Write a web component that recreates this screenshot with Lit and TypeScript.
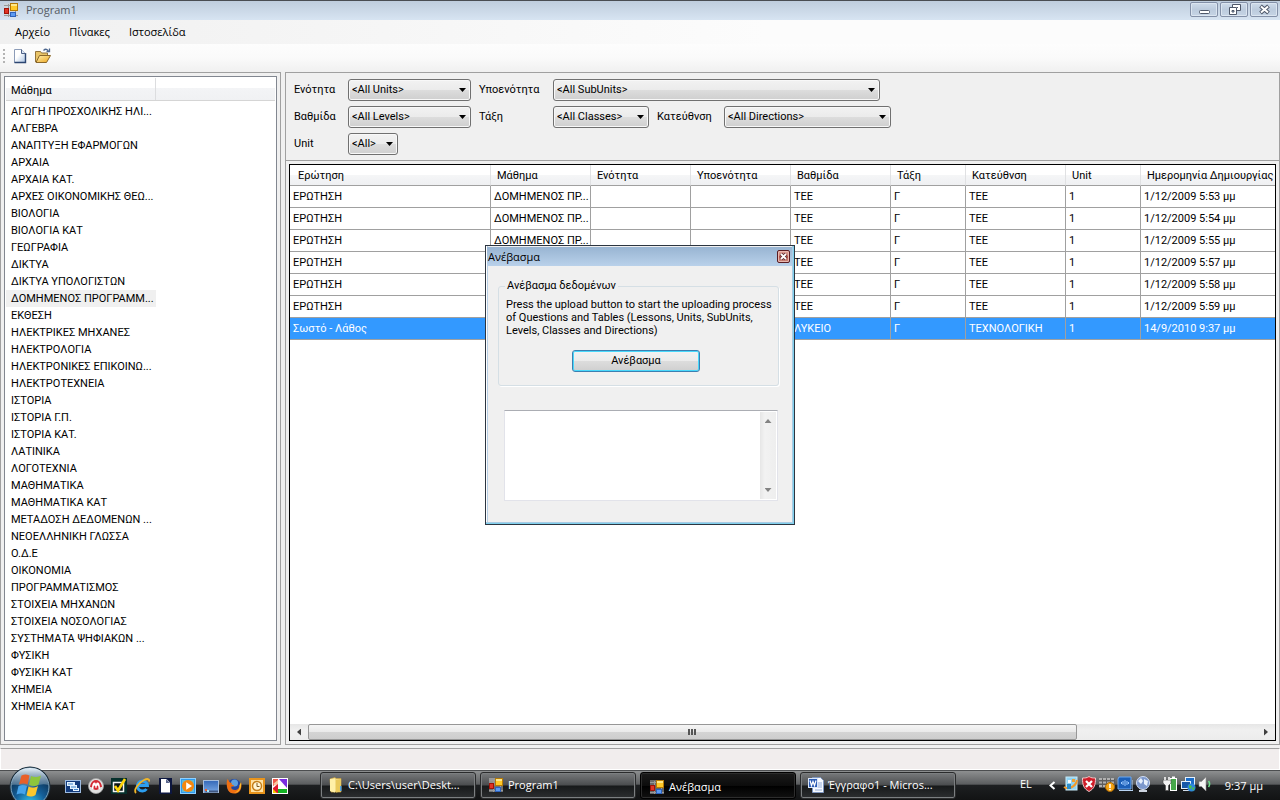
import { LitElement, html, css, svg, nothing } from "lit";
import { customElement, property, state } from "lit/decorators.js";
import { classMap } from "lit/directives/class-map.js";

const formIcon = svg`
  <rect x="1" y="1" width="14" height="14" fill="#d8d8d8" opacity=".45"/>
  <path d="M1 3.500h6M1 13.500h14M5.500 2v13M12.500 9v6" stroke="#9a9a9a" fill="none"/>
  <rect x="7.500" y="1.500" width="7" height="7" fill="#ffc928" stroke="#b57a06"/>
  <rect x="8" y="2" width="6" height="2" fill="#ffe88a"/>
  <rect x="1.500" y="6.500" width="4" height="5" fill="#e03424" stroke="#a01208"/>
  <rect x="7.500" y="10.500" width="5" height="4" fill="#5c9bf2" stroke="#2e62bc"/>`;

const icons: Record<string, unknown> = {
  form: formIcon,
  newdoc: svg`
    <defs><linearGradient id="nd" x2="1" y2="1"><stop offset=".4" stop-color="#fff"/><stop offset="1" stop-color="#a9c2e2"/></linearGradient></defs>
    <path d="M2.500 1.500h7l4 4v9h-11z" fill="url(#nd)" stroke="#8c9cb8"/>
    <path d="M13.500 5v9.500h-11" stroke="#2c4672" fill="none" stroke-width="1.400"/>
    <path d="M9.500 1.500v4h4" fill="#dce6f4" stroke="#4e6288"/>`,
  open: svg`
    <defs><linearGradient id="fo" x2="1" y2="1"><stop offset="0" stop-color="#fff0b0"/><stop offset="1" stop-color="#eda51c"/></linearGradient></defs>
    <path d="M.5 14V3.500h5l1 1.500h6v3" fill="#e9c468" stroke="#93733a"/>
    <path d="M1 14.500L4.500 7.500h11l-4 7z" fill="url(#fo)" stroke="#8a672a"/>
    <path d="M8.500 2.500c2-2 4-1.500 5 1M11.500 3.500h3v-3" fill="none" stroke="#4d678f" stroke-width="1.300"/>`,
  switcher: svg`
    <rect x=".5" y="2.500" width="15" height="12" fill="#123a7c" stroke="#9dbbe0"/>
    <path d="M2 4h8v4H2zM5 7h7v4H5zM8 10h6v3H8z" fill="#e4f2ff"/>
    <path d="M3 5.500h5v1H3zM6 8.500h5v1H6zM9 11h4v1H9z" fill="#3f84cc"/>`,
  avira: svg`
    <circle cx="8" cy="8" r="7.500" fill="#e0e0e0" stroke="#a4a4a4" stroke-width=".8"/>
    <path d="M2 9a6 6 0 0 1 12 0z" fill="#d42a34"/><circle cx="8" cy="7" r="5" fill="#d42a34"/>
    <path d="M4 11c0-4 .8-6.500 2.500-6.500C8 4.500 8 6 8 8c0-2 0-3.500 1.500-3.500C11.200 4.500 12 7 12 11h-1.500c0-2-.2-3.500-1-3.500S8.500 9 8.500 10h-1c0-1-.2-2.500-1-2.500s-1 1.500-1 3.500z" fill="#fff"/>`,
  check: svg`
    <rect width="16" height="16" fill="#06302c"/><rect x="2.500" y="4.500" width="10" height="9" fill="#0c1414" stroke="#f4f4f4" stroke-width="1.500"/>
    <path d="M4 8l3 4.500L14 1" fill="none" stroke="#ffd60a" stroke-width="2.600"/>`,
  ie: svg`
    <path d="M12.500 11a5 5 0 1 1 .9-3.500H5" fill="none" stroke="#2c9ef0" stroke-width="3"/>
    <path d="M2 15C-1 12 5 4.500 10 2c3-1.500 6-1.500 5 1.500" fill="none" stroke="#efb52a" stroke-width="1.800"/>`,
  page: svg`<rect x="2" width="13" height="16" fill="#0d1740"/><path d="M4 1h5.500L13 4.500V14.500H4z" fill="#fff"/><path d="M9 1v4h4" fill="#5c6890"/>`,
  player: svg`
    <rect x=".5" y=".5" width="15" height="15" fill="#2e9cf0" stroke="#8fd0ff"/><path d="M2 2h12v12H2z" fill="#8ad0c0" opacity=".6"/>
    <circle cx="8" cy="8" r="6" fill="#f5870f"/><path d="M6.200 4.200v7.600L12 8z" fill="#fff"/>`,
  desktop: svg`
    <defs><linearGradient id="dk" x2="0" y2="1"><stop offset="0" stop-color="#3468b8"/><stop offset="1" stop-color="#7aa8e4"/></linearGradient></defs>
    <rect x=".5" y="2.500" width="15" height="12" fill="url(#dk)" stroke="#a8bedc"/><path d="M4 12.500h11v2H1z" fill="#3f5680"/>
    <rect x="2" y="11" width="2" height="2" fill="#f0602c"/><rect x="4" y="12" width="2" height="2" fill="#a0e8f8"/>`,
  firefox: svg`
    <circle cx="8" cy="8" r="7" fill="#2346a0"/><circle cx="8.500" cy="5" r="3.500" fill="#5ea0e0"/>
    <path d="M1.500 1C0 5 0 15.500 8 15.500c6.500 0 8.500-6 7-11.500-.5 2-.8 3-1.500 3.500C13 11 11 12 9 12c-3 0-4.300-2-3.500-3.500C7 8.500 8 8 8 7.200L5.500 6.500 5.800 5 4 4.500z" fill="#ee6f12"/>
    <path d="M15 4.500c1 6.500-3 10.500-7.500 10.500 4.500-1.500 6.500-4 6-8z" fill="#ffc02a"/>`,
  outlook: svg`
    <rect x="1" y="1" width="14" height="14" fill="#ffe2a4" stroke="#e8941c" stroke-width="2"/>
    <circle cx="8" cy="8" r="4.500" fill="#fff5d4" stroke="#c47e1a" stroke-width="1.500"/><path d="M8 5v3.500h2.500" fill="none" stroke="#80571a"/>`,
  squares: svg`
    <rect width="16" height="16" fill="#fff"/><path d="M1 1h5v4L1 8z" fill="#f05a48"/><path d="M7 1h8v9z" fill="#7a2ce0"/>
    <path d="M1 6l5-4v7z" fill="#f8c8a0"/><path d="M1 10l5-4v9H1z" fill="#e01a2c"/><path d="M1 11l4 4H1z" fill="#f8d000"/><path d="M6 11h9v4H6z" fill="#14b424"/><path d="M8 5l5 5H6z" fill="#fff"/>`,
  folder: svg`
    <path d="M2 2l5-1.500 1 1h5V15H3z" fill="#f3dc84" stroke="#c7a044" stroke-width=".7"/><path d="M2 2l5-.5V15.500L2 14z" fill="#fff0a8"/>
    <path d="M8 3v12.500l4.500-1V2z" fill="#e9c95c"/><path d="M12 9h1.500v5H12z" fill="#4ea4e8"/>`,
  word: svg`
    <path d="M4.500.5h8l3 3v12h-11z" fill="#f7faff" stroke="#7e96c0"/><path d="M10 6h4M10 8h4M7 13h7M10 10h4" stroke="#93abd8"/>
    <rect x=".5" y="1.500" width="9" height="9" fill="#2c5cb4" stroke="#dce8fa"/>
    <path d="M2 3.500L3.500 8.500 5 4.500 6.500 8.500 8 3.500" fill="none" stroke="#fff" stroke-width="1.200"/>`,
  update: svg`
    <rect x="3" y="1" width="11" height="13" fill="#8fd3f4" stroke="#c8ecfa"/><path d="M5 4h3v3H5z" fill="#f8fcff"/><path d="M9 3h3v3H9z" fill="#f0a030"/>
    <path d="M1 11c4 3 12 0 13-7" fill="none" stroke="#f29a28" stroke-width="2"/><path d="M4 8h4v5H4z" fill="#2d8cc8"/>`,
  shield: svg`
    <path d="M8 .5c2 1.500 4 1.500 6.500 1.500 0 7-1 10.500-6.500 13.500C2.500 12.500 1.500 9 1.500 2 4 2 6 2 8 .5z" fill="#cf1c28" stroke="#f0c8c8"/>
    <path d="M5 5l6 6M11 5l-6 6" stroke="#fff" stroke-width="2.200"/>`,
  grid: svg`
    <path d="M0 3h16v9H0z" fill="#5c5c5c"/><path d="M0 3h16M0 6.500h16M0 10h9" stroke="#b0b0b0" stroke-width="2" stroke-dasharray="3 1"/>
    <circle cx="11" cy="11" r="4.500" fill="#f4a414" stroke="#a86808"/><path d="M11 8v4M11 13v1.200" stroke="#fff" stroke-width="1.600"/>`,
  chip: svg`
    <path d="M2 1h12v12H1V3z" fill="#1b5fb8" stroke="#6eaaf0"/><path d="M2 14.500h14V4" stroke="#b8d4f4" fill="none"/>
    <path d="M8 4v6M6 5v4M10 5v4M4.500 6v2M11.500 6v2" stroke="#9ccaff"/>`,
  globe: svg`
    <circle cx="8" cy="7" r="6.500" fill="#7c98cc" stroke="#d2def4"/><path d="M3 5l3-3 2 3-2 3zM9 3l4 2-1 5-3-2z" fill="#e8f0fc"/>
    <path d="M4 15h8M8 13v2" stroke="#cdd4e0" stroke-width="1.800"/>`,
  power: svg`
    <rect x="8.500" y="2.500" width="6" height="12" fill="#46a84a" stroke="#fff"/><rect x="10" y=".5" width="3" height="2" fill="#fff"/>
    <path d="M1 4h8v3L6.500 9.500v5h-3v-5L1 7z" fill="#f2f2f2" stroke="#444" stroke-width=".6"/><path d="M3 1v3M7 1v3" stroke="#fff" stroke-width="1.500"/>`,
  network: svg`
    <rect x="5.500" y="1.500" width="9" height="7" fill="#1a6cc8" stroke="#e4f0fc"/><rect x="1.500" y="5.500" width="9" height="7" fill="#1658a8" stroke="#e4f0fc"/>
    <path d="M3 14.500h6" stroke="#d4dce8"/><circle cx="11.500" cy="11.500" r="4" fill="#2d86dc"/><path d="M9 9l3 1-1 3-2-1zM12 12l3-1-2 4z" fill="#49c04c"/>`,
  sound: svg`
    <path d="M1 5.500h2.500L8 1v14l-4.500-4.500H1z" fill="#f4f4f4" stroke="#8a8a8a" stroke-width=".6"/><path d="M10.500 5c1.500 2 1.500 4 0 6" fill="none" stroke="#6ce08a" stroke-width="1.500"/>`,
};

@customElement("app-icon")
class AppIcon extends LitElement {
  @property() name = "form";
  static styles = css`
    :host { display: block; flex: none; width: 16px; height: 16px; }
    .glyph { display: block; width: 100%; height: 100%; }
  `;
  render() {
    return html`<svg class="glyph" viewBox="0 0 16 16" aria-hidden="true">${icons[this.name]}</svg>`;
  }
}

@customElement("combo-box")
class ComboBox extends LitElement {
  @property() value = "";
  @property() label = "";
  static styles = css`
    :host { display: flex; align-items: center; font: 11px/16px Roboto, "Liberation Sans", sans-serif; }
    .label { flex: none; width: var(--label-width, 54px); box-sizing: border-box; }
    .field { display: grid; flex: 1; align-items: center; }
    .select, .arrow { grid-area: 1 / 1; }
    .select {
      appearance: none; width: 100%; height: 22px; padding: 0 16px 0 3px; margin: 0; color: #000;
      border: 1px solid #707070; border-radius: 3px; box-shadow: inset 0 0 0 1px #f8f8f8;
      background: linear-gradient(#f2f2f2, #ebebeb 50%, #dddddd 50%, #cfcfcf);
      font: 11px/16px Roboto, "Liberation Sans", sans-serif;
    }
    .arrow { justify-self: end; margin-right: 5px; pointer-events: none; width: 7px; height: 4px; background: #000; clip-path: polygon(0 0, 100% 0, 50% 100%); }
  `;
  render() {
    return html`
      <label class="label" for="s">${this.label}</label>
      <span class="field">
        <select class="select" id="s"><option>${this.value}</option></select>
        <span class="arrow"></span>
      </span>`;
  }
}

@customElement("lesson-list")
class LessonList extends LitElement {
  @property({ attribute: false }) items: string[] = [];
  @state() selected = 11;
  static styles = css`
    :host { display: block; box-sizing: border-box; padding: 1px; background: #fff; border: 1px solid #828790; overflow: hidden; font: 11px/17px Roboto, "Liberation Sans", sans-serif; }
    .head { display: flex; height: 22px; border-bottom: 1px solid #d5d5d5; background: linear-gradient(#fff 45%, #f3f4f6 45%, #f0f1f3); }
    .title { width: 144px; padding: 4px 0 0 5px; border-right: 1px solid #dcdddf; }
    .items { list-style: none; margin: 2px 0 0; padding: 0; }
    .item { width: 145px; height: 17px; padding-left: 5px; white-space: nowrap; cursor: default; }
    .on { background: #f0f0f0; }
  `;
  render() {
    return html`
      <div class="head"><div class="title">Μάθημα</div></div>
      <ul class="items" role="listbox" aria-label="Μάθημα">
        ${this.items.map((t, i) => html`<li role="option" aria-selected=${i === this.selected}
          class=${classMap({ item: true, on: i === this.selected })} @click=${() => (this.selected = i)}>${t}</li>`)}
      </ul>`;
  }
}

@customElement("question-grid")
class QuestionGrid extends LitElement {
  @property({ attribute: false }) rows: string[][] = [];
  static styles = css`
    :host { display: flex; flex-direction: column; box-sizing: border-box; border: 1px solid #000; background: #fff; overflow: hidden; font: 11px/16px Roboto, "Liberation Sans", sans-serif; }
    .scroller { flex: 1; overflow: hidden; }
    .table { width: 100%; table-layout: fixed; border-collapse: separate; border-spacing: 0; }
    .c0 { width: 201px; } .wide { width: 100px; } .slim { width: 75px; }
    .th { height: 21px; box-sizing: border-box; padding: 2px 0 0 6px; text-align: left; font-weight: 400; white-space: nowrap; border-right: 1px solid #e0e1e3; border-bottom: 1px solid #a0a0a0; background: linear-gradient(#fff 50%, #f5f6f7 50%, #eff0f2); }
    .th:first-child { padding-left: 8px; }
    .td { height: 22px; box-sizing: border-box; padding: 0 0 0 3px; white-space: nowrap; border-right: 1px solid #a0a0a0; border-bottom: 1px solid #a0a0a0; }
    .th:last-child, .td:last-child { border-right: 0; }
    .on .td { background: #3399ff; color: #fff; }
    .bar { display: flex; height: 16px; background: linear-gradient(#e6e6e6, #f0f0f0 40%, #ececec); }
    .step { display: grid; place-items: center; width: 18px; padding: 0; border: 0; background: none; }
    .tri { width: 4px; height: 7px; background: #404040; clip-path: polygon(0 50%, 100% 0, 100% 100%); }
    .next { transform: scaleX(-1); }
    .track { flex: 1; display: flex; }
    .thumb { display: flex; justify-content: center; align-items: center; gap: 1px; box-sizing: border-box; width: 81%; border: 1px solid #979797; border-radius: 2px; background: linear-gradient(#f5f5f5, #e9e9e9 50%, #d4d4d4 50%, #cdcdcd); }
    .grip { width: 2px; height: 6px; background: #555; }
  `;
  render() {
    const heads = ["Ερώτηση", "Μάθημα", "Ενότητα", "Υποενότητα", "Βαθμίδα", "Τάξη", "Κατεύθνση", "Unit", "Ημερομηνία Δημιουργίας"];
    const cols = ["c0", "wide", "wide", "wide", "wide", "slim", "wide", "slim", ""];
    return html`
      <div class="scroller">
        <table class="table">
          <colgroup>${cols.map((c) => html`<col class=${c || nothing}>`)}</colgroup>
          <thead><tr>${heads.map((h) => html`<th class="th" scope="col">${h}</th>`)}</tr></thead>
          <tbody>${this.rows.map((r, i) => html`
            <tr class=${classMap({ on: i === this.rows.length - 1 })}>${r.map((c) => html`<td class="td">${c}</td>`)}</tr>`)}
          </tbody>
        </table>
      </div>
      <div class="bar">
        <button class="step" aria-label="Αριστερά"><span class="tri"></span></button>
        <div class="track"><div class="thumb"><span class="grip"></span><span class="grip"></span><span class="grip"></span></div></div>
        <button class="step" aria-label="Δεξιά"><span class="tri next"></span></button>
      </div>`;
  }
}

@customElement("upload-dialog")
class UploadDialog extends LitElement {
  static styles = css`
    :host { display: flex; flex-direction: column; box-sizing: border-box; border: 1px solid #2c3540; background: #f0f0f0; box-shadow: inset -1px -1px #7fd0ec, inset -2px -2px #a9cbe4, inset 1px 0 #fff, inset 2px 0 #b8cfe6; font: 11px/16px Roboto, "Liberation Sans", sans-serif; }
    .bar { display: flex; align-items: center; justify-content: space-between; height: 19px; margin: 1px 2px 0 1px; padding-right: 2px; background: linear-gradient(#98b4d2, #b9d1ea); font: 11px/16px "Open Sans", "Noto Sans", sans-serif; }
    .title { padding: 1px 0 0 1px; }
    .close { display: grid; place-items: center; width: 13px; height: 13px; padding: 0; border: 1px solid #5a1c22; border-radius: 2px; background: linear-gradient(#e0a59c, #c47166 50%, #b45348 50%, #cf8f84); box-shadow: inset 0 0 0 1px #e8b8b0; }
    .x { width: 9px; height: 9px; }
    .body { flex: 1; padding: 12px 15px 23px 12px; display: flex; flex-direction: column; }
    .group { margin: 0; padding: 4px 8px 13px 7px; border: 1px solid #d5dfe5; border-radius: 3px; min-width: 0; box-shadow: 1px 1px #fff; }
    .legend { padding: 0 2px; margin-left: -1px; }
    .text { margin: 0; font: 11px/13px Roboto, "Liberation Sans", sans-serif; white-space: nowrap; }
    .go { display: block; width: 128px; height: 22px; margin: 13px auto 0 66px; padding: 0; border: 1px solid #3c7fb1; border-radius: 3px; box-shadow: inset 0 0 0 1px #48d8fb; background: linear-gradient(#f2f2f2, #ebebeb 50%, #dddddd 50%, #cfcfcf); font: 11px/16px Roboto, sans-serif; color: #000; }
    .log { flex: 1; display: flex; margin: 24px 1px 0 6px; border: 1px solid #e2e3ea; border-top-color: #abadb3; background: #fff; }
    .area { flex: 1; min-width: 0; padding: 2px; border: 0; resize: none; outline: 0; overflow: hidden; font: 11px/16px Roboto, sans-serif; }
    .scroll { display: flex; flex-direction: column; justify-content: space-between; align-items: center; width: 16px; padding: 7px 0; margin: 1px; background: linear-gradient(90deg, #e6e6e6, #f2f2f2 30%, #eeeeee); box-sizing: border-box; }
    .tri { width: 7px; height: 4px; background: #838383; clip-path: polygon(50% 0, 100% 100%, 0 100%); }
    .down { transform: scaleY(-1); }
  `;
  render() {
    return html`
      <div class="bar"><span class="title">Ανέβασμα</span>
        <button class="close" aria-label="Κλείσιμο"><svg class="x" viewBox="0 0 9 9">
          <path d="M2 2l5 5M7 2L2 7" stroke="#5b2a30" stroke-width="3.400"/><path d="M2 2l5 5M7 2L2 7" stroke="#fff" stroke-width="1.800"/></svg></button>
      </div>
      <div class="body">
        <fieldset class="group"><legend class="legend">Ανέβασμα δεδομένων</legend>
          <p class="text">Press the upload button to start the uploading process<br>of Questions and Tables (Lessons, Units, SubUnits,<br>Levels, Classes and Directions)</p>
          <button class="go">Ανέβασμα</button>
        </fieldset>
        <div class="log"><textarea class="area" aria-label="Αρχείο καταγραφής" readonly></textarea>
          <div class="scroll"><span class="tri"></span><span class="tri down"></span></div></div>
      </div>`;
  }
}

@customElement("task-bar")
class TaskBar extends LitElement {
  static styles = css`
    :host { display: flex; align-items: center; height: 30px; flex: none; box-sizing: border-box; border-top: 1px solid #4c4e50; background: linear-gradient(#8d8f90, #5c5e60 45%, #1d1f21 50%, #121314); color: #fff; font: 11px/16px "Open Sans", "Noto Sans", sans-serif; }
    .start { width: 42px; height: 42px; margin: -5px 14px 0 9px; padding: 0; border: 0; background: none; flex: none; align-self: flex-start; }
    .orb { display: block; width: 42px; height: 42px; }
    .quick { display: flex; gap: 7px; }
    .tasks { display: flex; gap: 4px; margin-left: 32px; flex: 1; min-width: 0; }
    .task { display: flex; align-items: center; gap: 4px; box-sizing: border-box; width: 156px; height: 27px; padding: 0 7px 1px; border: 1px solid #2a2b2c; border-radius: 3px; box-shadow: inset 0 0 0 1px #7c7f81; background: linear-gradient(#77797b, #4b4d4f 48%, #17191a 52%, #2c2e30); color: #fff; font: 11px/16px "Open Sans", "Noto Sans", sans-serif; white-space: nowrap; }
    .on { padding: 2px 8px 0; border-color: #000; background: linear-gradient(#1b1b1b, #0c0c0c 50%, #000 52%, #111); box-shadow: inset 0 0 0 1px #2d2d2d; }
    .tray { display: flex; align-items: center; margin-right: 17px; }
    .group { display: flex; gap: 2px; margin-right: 11px; padding-bottom: 4px; }
    .lang { margin-right: 17px; padding-bottom: 4px; }
    .chev { width: 7px; height: 9px; margin-right: 7px; }
  `;
  render() {
    const quick = ["switcher", "avira", "check", "ie", "page", "player", "desktop", "firefox", "outlook", "squares"];
    const tasks = [["folder", "C:\\Users\\user\\Deskt..."], ["form", "Program1"], ["form", "Ανέβασμα"], ["word", "Έγγραφο1 - Micros..."]];
    return html`
      <button class="start" aria-label="Έναρξη"><svg class="orb" viewBox="0 0 42 42">
        <defs>
          <radialGradient id="ob" cx=".5" cy=".95" r=".8"><stop offset="0" stop-color="#35c8f0"/><stop offset=".5" stop-color="#15609a"/><stop offset="1" stop-color="#0b2c4c"/></radialGradient>
          <linearGradient id="gl" x2="0" y2="1"><stop offset="0" stop-color="#e8f2fa"/><stop offset="1" stop-color="#6488a4" stop-opacity=".55"/></linearGradient>
        </defs>
        <circle cx="21" cy="21" r="20.500" fill="#1a2b38"/><circle cx="21" cy="21" r="19" fill="url(#ob)" stroke="#7fa6c0"/>
        <path d="M2.500 19C3 8 11 2 21 2s18 6 18.500 17c-9-3-13 3-19 2s-10-3-18-2z" fill="url(#gl)"/>
        <path d="M12.500 9.500c3-1.500 5-1.500 8 0L18.500 18.500c-3-1.500-5.500-1.500-8.500 0z" fill="#e8602a"/>
        <path d="M22 10c3 1.500 6 1.500 10-.5l-2.500 9c-3 2-6 2-9.500.5z" fill="#8ec63c"/>
        <path d="M9.500 20c3-1.500 5.500-1.500 8.500 0L16 28.500c-3-1.500-5-1.500-8.500 0z" fill="#46a4ec"/>
        <path d="M19.500 20.500c3 1.500 6 1.500 9.500-.5l-2.500 9c-3 2-6 2-9 .5z" fill="#fcc72e"/>
      </svg></button>
      <div class="quick">${quick.map((n) => html`<app-icon name=${n}></app-icon>`)}</div>
      <div class="tasks">${tasks.map(([n, t], i) => html`
        <button class=${classMap({ task: true, on: i === 2 })}><app-icon name=${n}></app-icon><span>${t}</span></button>`)}</div>
      <div class="tray">
        <span class="lang">EL</span>
        <svg class="chev" viewBox="0 0 7 9"><path d="M5.500 1L1.500 4.500l4 3.500" fill="none" stroke="#fff" stroke-width="2"/></svg>
        <div class="group">${["update", "shield", "grid", "chip", "globe"].map((n) => html`<app-icon name=${n}></app-icon>`)}</div>
        <div class="group">${["power", "network", "sound"].map((n) => html`<app-icon name=${n}></app-icon>`)}</div>
        <span>9:37 μμ</span>
      </div>`;
  }
}

const LESSONS = [
  "ΑΓΩΓΗ ΠΡΟΣΧΟΛΙΚΗΣ ΗΛΙ...", "ΑΛΓΕΒΡΑ", "ΑΝΑΠΤΥΞΗ ΕΦΑΡΜΟΓΩΝ", "ΑΡΧΑΙΑ", "ΑΡΧΑΙΑ ΚΑΤ.", "ΑΡΧΕΣ ΟΙΚΟΝΟΜΙΚΗΣ ΘΕΩ...",
  "ΒΙΟΛΟΓΙΑ", "ΒΙΟΛΟΓΙΑ ΚΑΤ", "ΓΕΩΓΡΑΦΙΑ", "ΔΙΚΤΥΑ", "ΔΙΚΤΥΑ ΥΠΟΛΟΓΙΣΤΩΝ", "ΔΟΜΗΜΕΝΟΣ ΠΡΟΓΡΑΜΜ...", "ΕΚΘΕΣΗ",
  "ΗΛΕΚΤΡΙΚΕΣ ΜΗΧΑΝΕΣ", "ΗΛΕΚΤΡΟΛΟΓΙΑ", "ΗΛΕΚΤΡΟΝΙΚΕΣ ΕΠΙΚΟΙΝΩ...", "ΗΛΕΚΤΡΟΤΕΧΝΕΙΑ", "ΙΣΤΟΡΙΑ", "ΙΣΤΟΡΙΑ Γ.Π.", "ΙΣΤΟΡΙΑ ΚΑΤ.",
  "ΛΑΤΙΝΙΚΑ", "ΛΟΓΟΤΕΧΝΙΑ", "ΜΑΘΗΜΑΤΙΚΑ", "ΜΑΘΗΜΑΤΙΚΑ ΚΑΤ", "ΜΕΤΑΔΟΣΗ ΔΕΔΟΜΕΝΩΝ ...", "ΝΕΟΕΛΛΗΝΙΚΗ ΓΛΩΣΣΑ", "Ο.Δ.Ε", "ΟΙΚΟΝΟΜΙΑ",
  "ΠΡΟΓΡΑΜΜΑΤΙΣΜΟΣ", "ΣΤΟΙΧΕΙΑ ΜΗΧΑΝΩΝ", "ΣΤΟΙΧΕΙΑ ΝΟΣΟΛΟΓΙΑΣ", "ΣΥΣΤΗΜΑΤΑ ΨΗΦΙΑΚΩΝ ...", "ΦΥΣΙΚΗ", "ΦΥΣΙΚΗ ΚΑΤ", "ΧΗΜΕΙΑ", "ΧΗΜΕΙΑ ΚΑΤ",
];
const ROWS = [
  ...[53, 54, 55, 57, 58, 59].map((m) => ["ΕΡΩΤΗΣΗ", "ΔΟΜΗΜΕΝΟΣ ΠΡ...", "", "", "ΤΕΕ", "Γ", "ΤΕΕ", "1", `1/12/2009 5:${m} μμ`]),
  ["Σωστό - Λάθος", "", "", "", "ΛΥΚΕΙΟ", "Γ", "ΤΕΧΝΟΛΟΓΙΚΗ", "1", "14/9/2010 9:37 μμ"],
];

@customElement("app-root")
class AppRoot extends LitElement {
  static styles = css`
    :host { display: flex; flex-direction: column; height: 100vh; position: relative; overflow: hidden; background: #f0f0f0; color: #000; font: 11px/16px "Open Sans", "Noto Sans", sans-serif; }
    .title { display: flex; align-items: center; height: 20px; box-sizing: border-box; flex: none; padding: 0 2px 2px 3px; border-top: 1px solid #4a4d52; background: linear-gradient(#bfcddd, #d7e4f2); color: #555b63; }
    .name { margin-left: 7px; flex: 1; }
    .wins { display: flex; gap: 2px; align-self: flex-start; padding-top: 1px; }
    .win { display: grid; place-items: center; width: 28px; height: 15px; padding: 0; border: 1px solid #8390a8; border-radius: 2px; background: linear-gradient(#cfdbea, #bccbdd 50%, #c6d4e5); box-shadow: inset 0 0 0 1px #dbe5f0; }
    .mark { width: 13px; height: 11px; }
    .menu { display: flex; align-items: center; height: 24px; flex: none; padding-left: 7px; background: linear-gradient(90deg, #f0f0f0, #fcfcfc 60%); }
    .link { padding: 0 8px; margin-right: 3px; border: 0; background: none; font: 11px/16px "Open Sans", "Noto Sans", sans-serif; color: #000; }
    .tools { display: flex; align-items: center; gap: 7px; height: 28px; box-sizing: border-box; padding: 0 0 5px 3px; flex: none; background: linear-gradient(#fdfdfd, #fafafa 50%, #f0f0f0); }
    .grip { width: 2px; height: 14px; background: repeating-linear-gradient(#b4b4b4 0 2px, transparent 2px 4px); }
    .tool { padding: 0; border: 0; background: none; }
    .main { display: flex; flex: 1; min-height: 0; gap: 4px; }
    .pane { border: 1px solid #a0a0a0; box-sizing: border-box; display: flex; flex-direction: column; min-width: 0; }
    .side { width: 281px; flex: none; padding: 3px; }
    .content { flex: 1; }
    .fill { flex: 1; min-height: 0; }
    .filters { display: flex; flex-direction: column; gap: 5px; padding: 6px 8px 5px; border-bottom: 1px solid #a0a0a0; }
    .row { display: flex; gap: 8px; }
    .w-m { width: 177px; } .w-l { width: 401px; --label-width: 74px; } .w-c { width: 170px; --label-width: 74px; }
    .w-d { width: 234px; --label-width: 67px; } .w-s { width: 104px; }
    .grid { flex: 1; min-height: 0; margin: 3px; }
    .status { height: 22px; flex: none; box-sizing: border-box; margin-top: 3px; border: 1px solid #fff; border-top: 1px solid #a0a0a0; background: #f1eded; }
    .dialog { position: absolute; left: calc(50% - 155px); top: calc(50% - 155px); width: 310px; height: 280px; }
  `;
  render() {
    return html`
      <header class="title"><app-icon name="form"></app-icon><span class="name">Program1</span>
        <div class="wins">
          <button class="win" aria-label="Ελαχιστοποίηση"><svg class="mark" viewBox="0 0 13 11"><rect x="1.500" y="6.500" width="10" height="3" rx="1" fill="#fff" stroke="#4f586a"/></svg></button>
          <button class="win" aria-label="Επαναφορά"><svg class="mark" viewBox="0 0 13 11"><path d="M4.500.5h8v6h-8z" fill="#fff" stroke="#4f586a"/><path d="M1.500 3.500h7v7h-7z" fill="#fff" stroke="#4f586a"/><path d="M4 6.500h2v1.500H4z" fill="#b8c8dc" stroke="#4f586a"/><path d="M9 3.500h1" stroke="#4f586a"/></svg></button>
          <button class="win" aria-label="Κλείσιμο"><svg class="mark" viewBox="0 0 13 11"><path d="M2.500 2l8 7M10.500 2l-8 7" stroke="#4f586a" stroke-width="4"/><path d="M3 2.500l7 6M10 2.500l-7 6" stroke="#fff" stroke-width="2"/></svg></button>
        </div>
      </header>
      <nav class="menu">${["Αρχείο", "Πίνακες", "Ιστοσελίδα"].map((t) => html`<button class="link">${t}</button>`)}</nav>
      <div class="tools"><span class="grip"></span>
        <button class="tool" aria-label="Νέο"><app-icon name="newdoc"></app-icon></button>
        <button class="tool" aria-label="Άνοιγμα"><app-icon name="open"></app-icon></button>
      </div>
      <main class="main">
        <section class="pane side"><lesson-list class="fill" .items=${LESSONS}></lesson-list></section>
        <section class="pane content">
          <div class="filters">
            <div class="row"><combo-box class="w-m" label="Ενότητα" value="<All Units>"></combo-box><combo-box class="w-l" label="Υποενότητα" value="<All SubUnits>"></combo-box></div>
            <div class="row"><combo-box class="w-m" label="Βαθμίδα" value="<All Levels>"></combo-box><combo-box class="w-c" label="Τάξη" value="<All Classes>"></combo-box><combo-box class="w-d" label="Κατεύθνση" value="<All Directions>"></combo-box></div>
            <div class="row"><combo-box class="w-s" label="Unit" value="<All>"></combo-box></div>
          </div>
          <question-grid class="grid" .rows=${ROWS}></question-grid>
        </section>
      </main>
      <footer class="status"></footer>
      <task-bar></task-bar>
      <upload-dialog class="dialog" role="dialog" aria-label="Ανέβασμα"></upload-dialog>`;
  }
}
